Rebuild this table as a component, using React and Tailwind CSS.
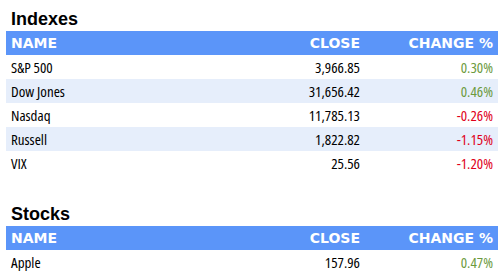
import React from 'react';

const indexes = [
  { name: 'S&P 500', close: '3,966.85', change: '0.30%', up: true },
  { name: 'Dow Jones', close: '31,656.42', change: '0.46%', up: true },
  { name: 'Nasdaq', close: '11,785.13', change: '-0.26%', up: false },
  { name: 'Russell', close: '1,822.82', change: '-1.15%', up: false },
  { name: 'VIX', close: '25.56', change: '-1.20%', up: false },
];

const stocks = [{ name: 'Apple', close: '157.96', change: '0.47%', up: true }];

const bodyFont = { fontFamily: '"Open Sans", sans-serif', fontStretch: 'condensed' };

const Section = ({ title, rows }) => (
  <div>
    <h2 className="text-[18px] leading-6 font-bold text-black pl-[5px] font-['Liberation_Sans',Arial,sans-serif]">
      {title}
    </h2>
    <div className="grid grid-cols-[1fr_120px_138px] h-6 items-center bg-[#5b95f9] text-white text-[14px] font-bold font-['DejaVu_Sans',Verdana,sans-serif]">
      <div className="pl-[5px]">NAME</div>
      <div className="text-right">CLOSE</div>
      <div className="text-right pr-[5px]">CHANGE %</div>
    </div>
    {rows.map((r, i) => (
      <div
        key={r.name}
        className={`grid grid-cols-[1fr_120px_138px] h-6 items-center text-[15px] text-black ${i % 2 === 1 ? 'bg-[#e6eefb]' : 'bg-white'}`}
        style={bodyFont}
      >
        <div className="pl-[5px]">{r.name}</div>
        <div className="text-right">{r.close}</div>
        <div className={`text-right pr-[5px] ${r.up ? 'text-[#6c9a3e]' : 'text-[#e0001b]'}`}>{r.change}</div>
      </div>
    ))}
  </div>
);

export default function App() {
  return (
    <div className="w-[504px] h-[272px] overflow-hidden bg-white px-[6px] pt-[7px] flex flex-col gap-[27px]">
      <Section title="Indexes" rows={indexes} />
      <Section title="Stocks" rows={stocks} />
    </div>
  );
}
